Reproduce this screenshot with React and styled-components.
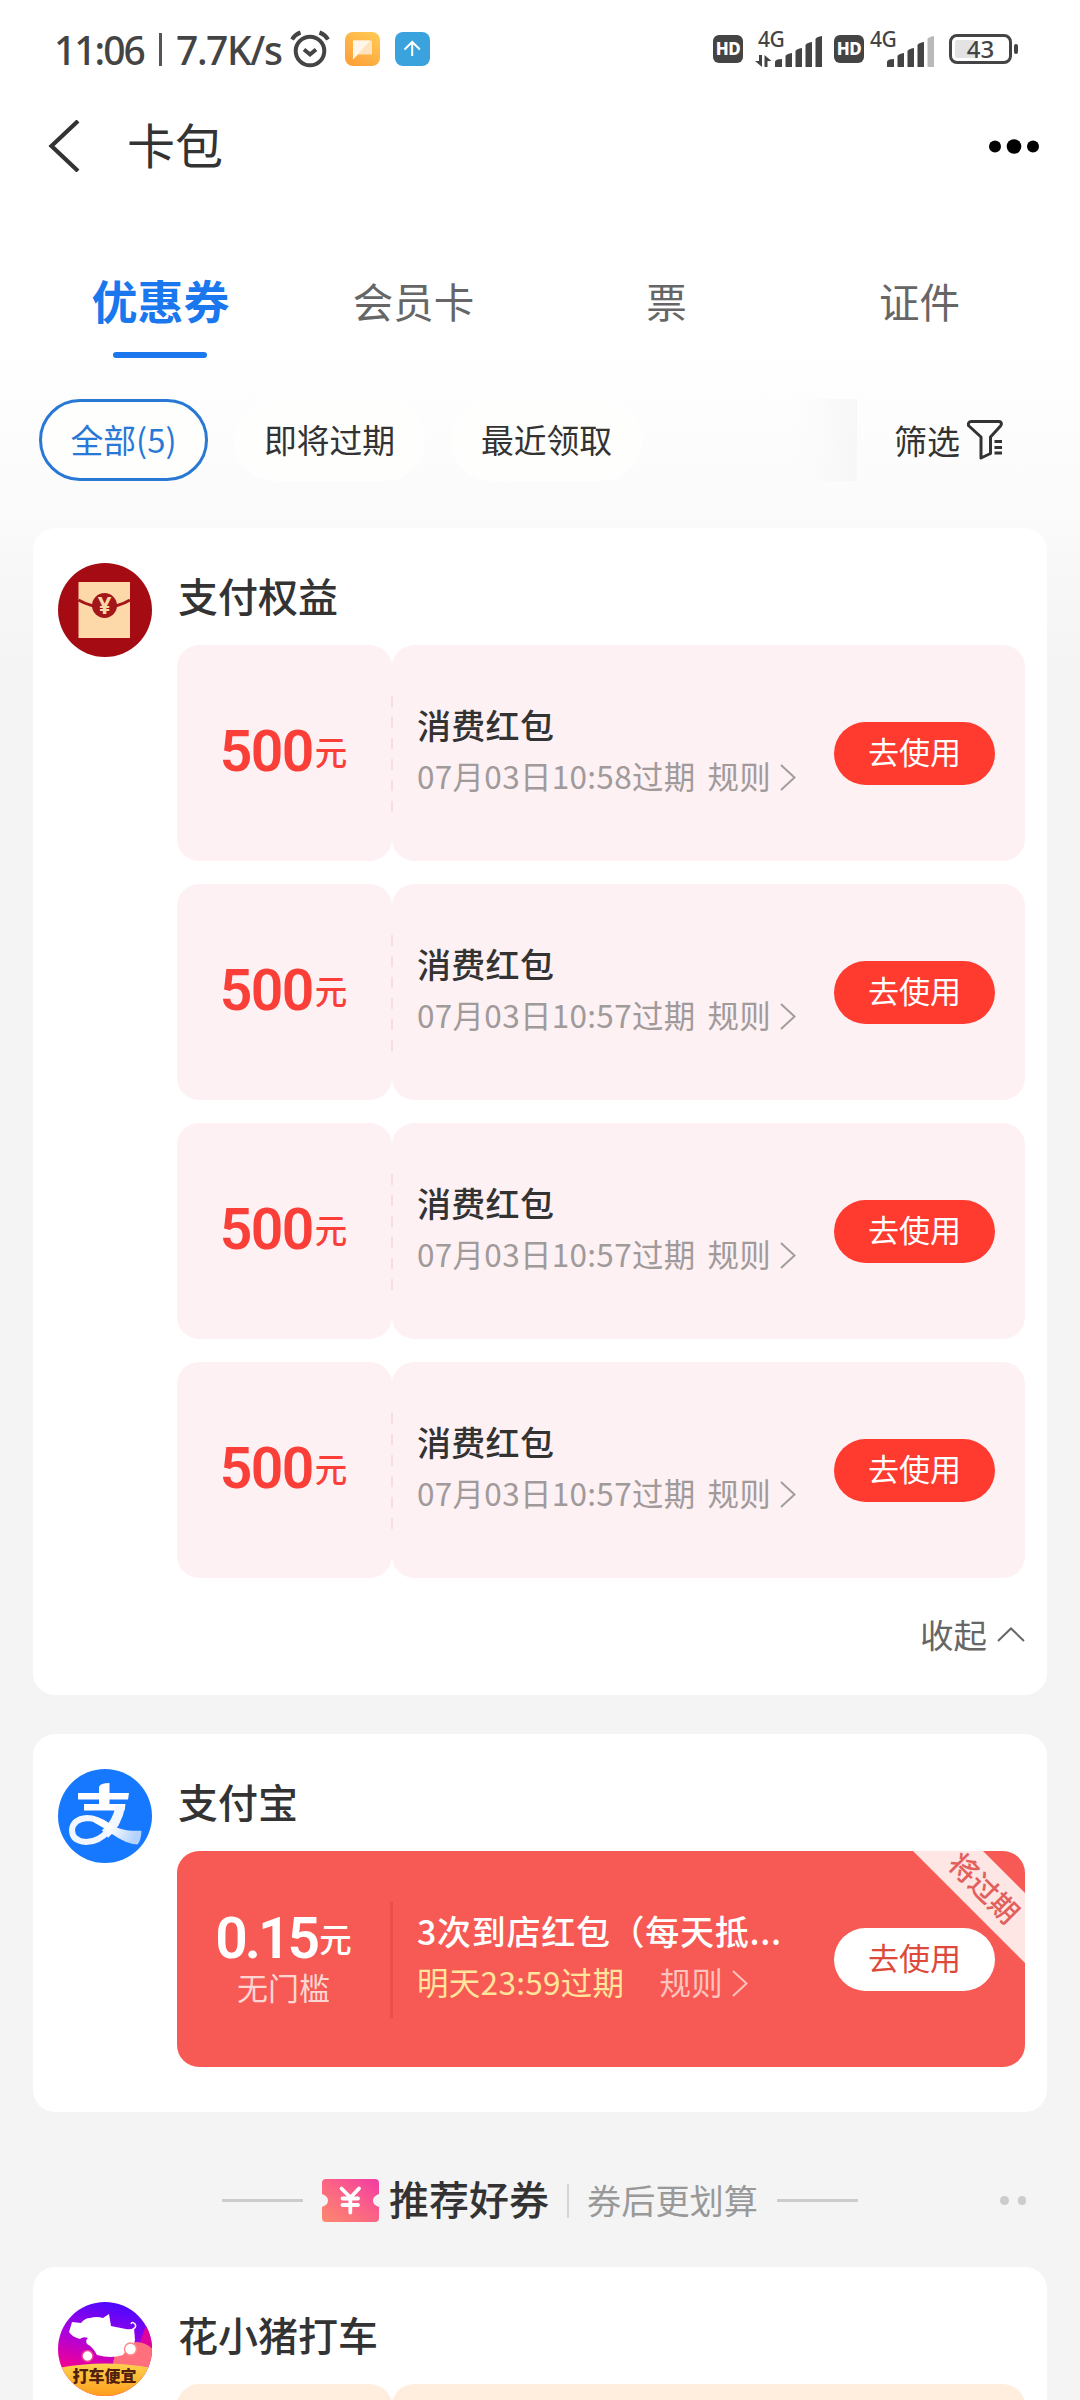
import styled, { createGlobalStyle, css } from "styled-components";

const GlobalStyle = createGlobalStyle`
  * {
    box-sizing: border-box;
  }
  body {
    margin: 0;
    background: #f5f5f5;
    font-family: "Noto Sans CJK SC", "Noto Sans", sans-serif;
    color: #333;
  }
`;

const redPackets = [
  { id: 1, time: "07月03日10:58过期" },
  { id: 2, time: "07月03日10:57过期" },
  { id: 3, time: "07月03日10:57过期" },
  { id: 4, time: "07月03日10:57过期" },
];

const tabs = ["优惠券", "会员卡", "票", "证件"];

// ---- icons ----

const AlarmIcon = () => (
  <svg width="40" height="38" viewBox="0 0 40 38" fill="none" stroke="#444" strokeWidth="4">
    <circle cx="20" cy="21" r="14.3" />
    <path d="M14 19.500l6 5 6-5" />
    <path d="M2 9.500Q5 4.500 10.500 2.500M38 9.500Q35 4.500 29.500 2.500" />
  </svg>
);

const MessageIcon = () => (
  <svg width="35" height="34" viewBox="0 0 35 34">
    <defs>
      <linearGradient id="msg" x1="1" y1="0" x2="0.3" y2="1">
        <stop offset="0" stopColor="#ffcc55" />
        <stop offset="1" stopColor="#fda23a" />
      </linearGradient>
    </defs>
    <rect width="35" height="34" rx="8" fill="url(#msg)" />
    <path d="M8 8.500h17.500a1.500 1.500 0 0 1 1.500 1.500v12.500H13l-5 5z" fill="#ffe3bd" />
    <path d="M8 8.500h17.500L8 27.500z" fill="#fff6e8" />
  </svg>
);

const UploadIcon = () => (
  <svg width="35" height="34" viewBox="0 0 35 34" fill="none">
    <rect width="35" height="34" rx="8" fill="#3aa3de" />
    <path d="M17.200 24V10M9.500 17.500l7.700-7.500 7.700 7.500" stroke="#fff" strokeWidth="2" />
  </svg>
);

const SignalIcon = ({ weak }) => (
  <svg width="48" height="31" viewBox="0 0 48 31" fill="#444">
    <path d="M0 31v-5q0-3 7-3v8z" />
    <path d="M10.500 31V20q1-2 6.500-3v14z" />
    <path d="M20.500 31V15q1-2 6.500-3v19z" />
    <path d="M30.500 31V9q1-2 6.500-3v25z" />
    <path d="M40.500 31V3q1-2 6.500-3v31z" fill={weak ? "#b9b9b9" : "#444"} />
  </svg>
);

const DataArrows = () => (
  <svg width="17" height="12" viewBox="0 0 17 12" fill="#444">
    <path d="M4 0h3v12L0 6h4zM9.500 12V0l7 6h-4v6z" />
  </svg>
);

const BackIcon = () => (
  <svg width="32" height="52" viewBox="0 0 32 52" fill="none" stroke="#333" strokeWidth="4.200">
    <path d="M30 1L3.500 26 30 51" />
  </svg>
);

const MoreIcon = () => (
  <svg width="50" height="15" viewBox="0 0 50 15">
    <circle cx="6" cy="7.500" r="6" />
    <circle cx="25" cy="7.500" r="7.300" />
    <circle cx="44" cy="7.500" r="6" />
  </svg>
);

const FunnelIcon = () => (
  <svg width="36" height="40" viewBox="0 0 36 40" fill="none" stroke="#333" strokeWidth="3">
    <path
      d="M4 1.500h28c2.500 0 3 3 1.500 4.500L23.500 17v16.500l-9.500 4.500V17L2 6C.500 4.500 1.500 1.500 4 1.500z"
      strokeLinejoin="round"
    />
    <path d="M27.500 21.500h7.500M27.500 27.500h7.500M27.500 33h7.500" />
  </svg>
);

const RedPacketLogo = () => (
  <svg width="94" height="94" viewBox="0 0 94 94">
    <circle cx="47" cy="47" r="47" fill="#a50b12" />
    <rect x="20.500" y="19" width="51.500" height="56" fill="#fdd9a9" />
    <path d="M20.500 37q12 7 26 7t25.500-7" fill="none" stroke="#a3161a" strokeWidth="3" />
    <circle cx="46.500" cy="42.500" r="12.500" fill="#a3161a" />
    <text x="46.500" y="51" textAnchor="middle" fontSize="24" fontWeight="700" fontFamily="Noto Sans" fill="#fbd6a6">
      ¥
    </text>
  </svg>
);

const AlipayLogo = () => (
  <svg width="94" height="94" viewBox="0 0 94 94">
    <defs>
      <linearGradient id="tail" x1="0" y1="0" x2="1" y2="0.300">
        <stop offset="0.400" stopColor="#fff" />
        <stop offset="1" stopColor="#b3d2fd" />
      </linearGradient>
    </defs>
    <circle cx="47" cy="47" r="47" fill="#1677ff" />
    <path
      d="M41 18q1-4 10.500-4v10H71l-1 6.500H51.500V35H67.500l-1 6.500H26V35h15v-4.500H20V24h21z"
      fill="#fff"
    />
    <path d="M62.500 37Q59 55 47 65" fill="none" stroke="#f2f7ff" strokeWidth="9.500" />
    <path
      d="M51 61Q41 73 28 73Q14 72 14 61Q15 50 29 49Q39 49 50 57"
      fill="none"
      stroke="#f2f7ff"
      strokeWidth="6"
    />
    <path d="M36 47.500Q50 54 60 59Q70 62.500 83.500 61.700Q83 72 79.500 75.500Q68 75 54 65Q45 58 36 53.500z" fill="url(#tail)" />
  </svg>
);

const PigLogo = () => (
  <svg width="94" height="94" viewBox="0 0 94 94">
    <defs>
      <clipPath id="pigClip">
        <circle cx="47" cy="47" r="47" />
      </clipPath>
      <linearGradient id="pigBg" x1="0.600" y1="0" x2="0.400" y2="0.750">
        <stop offset="0" stopColor="#4a08ff" />
        <stop offset="0.550" stopColor="#a800e0" />
        <stop offset="1" stopColor="#ee0098" />
      </linearGradient>
      <linearGradient id="pigBand" x1="0" y1="0" x2="0" y2="1">
        <stop offset="0" stopColor="#fbd24e" />
        <stop offset="1" stopColor="#ff9d1d" />
      </linearGradient>
    </defs>
    <g clipPath="url(#pigClip)">
      <rect width="94" height="94" fill="url(#pigBg)" />
      <path d="M94 10v40H80q4-20 14-40z" fill="#e0009c" />
      <circle cx="78" cy="63" r="23" fill="#ff6f7c" />
      <path d="M0 66q47-9 94 0v28H0z" fill="url(#pigBand)" />
      <path
        d="M14 20l9 1q4-5 9-5 7-2 13 0l6-4 2 12q10 2 15 3 4 1 8-1l1 12q-1 5-4 7-6 4-8 8-12 4-26 0-4-8-10-11-2-4 1-6-5-2-8 1-8-2-11-7z"
        fill="#fff"
      />
      <path d="M75 27q4-2 2-5-3-3-4 0" fill="none" stroke="#fff" strokeWidth="1.500" />
      <circle cx="29.500" cy="54" r="5.500" fill="#fff" stroke="#f43a94" strokeWidth="1.500" />
      <circle cx="72.500" cy="47" r="6" fill="#fff" stroke="#ff8a8a" strokeWidth="1.500" />
      <text
        x="46.500"
        y="80"
        textAnchor="middle"
        fontSize="16"
        fontWeight="900"
        fontFamily="Noto Sans CJK SC"
        fill="#53200d"
      >
        打车便宜
      </text>
    </g>
  </svg>
);

const TicketIcon = () => (
  <svg width="57" height="43" viewBox="0 0 57 43">
    <defs>
      <linearGradient id="ticket" x1="0" y1="1" x2="1" y2="0">
        <stop offset="0" stopColor="#fd8a6c" />
        <stop offset="0.500" stopColor="#fb6485" />
        <stop offset="1" stopColor="#f23ba5" />
      </linearGradient>
    </defs>
    <path
      d="M4 0h49q4 0 4 4v11q-6 2-6 6.500t6 6.500v11q0 4-4 4H4q-4 0-4-4V28q6-2 6-6.500T0 15V4q0-4 4-4z"
      fill="url(#ticket)"
    />
    <path
      d="M19.500 9.500l9 9 8.500-9M28.300 18.500v15M20.500 19.500h15.500M20.500 26h15.500"
      fill="none"
      stroke="#fff"
      strokeWidth="3.800"
      strokeLinecap="round"
    />
  </svg>
);

const ArrowRight = ({ color }) => (
  <svg width="16" height="27" viewBox="0 0 16 27" fill="none" stroke={color} strokeWidth="2">
    <path d="M1 1l13.500 12.500L1 26" />
  </svg>
);

const ArrowUp = () => (
  <svg width="28" height="15" viewBox="0 0 28 15" fill="none" stroke="#666" strokeWidth="2">
    <path d="M1 14L14 1.500 27 14" />
  </svg>
);

// ---- parts ----

const Coupon = ({ item }) => (
  <Ticket>
    <Amount>
      <Price>
        <Num>500</Num>元
      </Price>
    </Amount>
    <Dashed />
    <Detail>
      <Info>
        <Name>消费红包</Name>
        <Meta>
          {item.time}
          <Rule>规则</Rule>
          <ArrowRight color="#a39c9d" />
        </Meta>
      </Info>
      <UseButton>去使用</UseButton>
    </Detail>
  </Ticket>
);

const App = () => {
  return (
    <Page>
      <GlobalStyle />

      <StatusBar>
        <Clock>11:06</Clock>
        <Bar />
        <Speed>7.7K/s</Speed>
        <StatusIcons>
          <AlarmIcon />
          <MessageIcon />
          <UploadIcon />
        </StatusIcons>
        <Network>
          <Hd>HD</Hd>
          <Sim $gap={12}>
            <SimLabel>
              4G
              <DataArrows />
            </SimLabel>
            <SignalIcon />
          </Sim>
          <Hd $left={11}>HD</Hd>
          <Sim $gap={6}>
            <SimLabel $wide>4G</SimLabel>
            <SignalIcon weak />
          </Sim>
          <Battery>43</Battery>
          <BatteryTip />
        </Network>
      </StatusBar>

      <NavBar>
        <BackIcon />
        <NavTitle>卡包</NavTitle>
        <MoreIcon />
      </NavBar>

      <Tabs>
        {tabs.map((tab, i) => (
          <Tab key={tab} $active={i === 0}>
            {tab}
          </Tab>
        ))}
      </Tabs>

      <Filters>
        <Chip $active>全部(5)</Chip>
        <Chip>即将过期</Chip>
        <Chip>最近领取</Chip>
        <Fade />
        <FilterButton>
          筛选
          <FunnelIcon />
        </FilterButton>
      </Filters>

      <Card $height={1167}>
        <RedPacketLogo />
        <Body>
          <Shop>支付权益</Shop>
          <List>
            {redPackets.map((item) => (
              <Coupon key={item.id} item={item} />
            ))}
          </List>
          <Collapse>
            收起
            <ArrowUp />
          </Collapse>
        </Body>
      </Card>

      <Card $height={378} $top={39}>
        <AlipayLogo />
        <Body>
          <Shop>支付宝</Shop>
          <Ticket $red>
            <Amount $red>
              <Price>
                <Num $tight>0.15</Num>元
              </Price>
              <Limit>无门槛</Limit>
            </Amount>
            <Solid />
            <Detail $red>
              <Info>
                <Name $wide>3次到店红包（每天抵...</Name>
                <Meta $soon>
                  明天23:59过期
                  <Rule $soon>规则</Rule>
                  <ArrowRight color="#fcc3bf" />
                </Meta>
              </Info>
              <UseButton $white>去使用</UseButton>
            </Detail>
            <Ribbon>
              <RibbonText>将过期</RibbonText>
            </Ribbon>
          </Ticket>
        </Body>
      </Card>

      <Recommend>
        <Line />
        <TicketIcon />
        <RecTitle>推荐好券</RecTitle>
        <Split />
        <RecSub>券后更划算</RecSub>
        <Line />
        <Dots>
          <Dot />
          <Dot />
        </Dots>
      </Recommend>

      <Card $height={400}>
        <PigLogo />
        <Body>
          <Shop>花小猪打车</Shop>
          <Ticket>
            <Amount $orange />
            <Detail $orange />
          </Ticket>
        </Body>
      </Card>
    </Page>
  );
};

export default App;

const Page = styled.div`
  width: 1080px;
  height: 2400px;
  overflow: hidden;
  background: linear-gradient(#fff 340px, #fbfbfb 500px, #f8f8f8 560px, #f4f4f4 680px);
`;

const StatusBar = styled.div`
  height: 98px;
  padding-left: 54px;
  display: flex;
  align-items: center;
  font-family: "Noto Sans", sans-serif;
  font-size: 39px;
  font-weight: 500;
  color: #444;
`;

const Clock = styled.span`
  width: 91px;
  letter-spacing: -2px;
`;

const Bar = styled.span`
  width: 3px;
  height: 33px;
  margin: 0 14px;
  background: #555;
`;

const Speed = styled.span`
  width: 108px;
  margin-right: 6px;
  letter-spacing: -1.4px;
`;

const StatusIcons = styled.div`
  display: flex;
  align-items: center;
  gap: 15px;
`;

const Network = styled.div`
  display: flex;
  align-items: center;
  margin-left: auto;
  margin-right: 62px;
`;

const Hd = styled.span`
  width: 30px;
  height: 28px;
  margin-left: ${(p) => p.$left || 0}px;
  border-radius: 6px;
  background: #444;
  color: #fff;
  font-size: 17px;
  font-weight: 800;
  line-height: 28px;
  text-align: center;
  letter-spacing: -0.5px;
`;

const Sim = styled.div`
  display: flex;
  align-items: flex-end;
  height: 36px;
  margin-left: ${(p) => p.$gap}px;
`;

const SimLabel = styled.div`
  width: ${(p) => (p.$wide ? 17 : 20)}px;
  height: 36px;
  display: flex;
  flex-direction: column;
  justify-content: space-between;
  padding-left: ${(p) => (p.$wide ? 0 : 3)}px;
  white-space: nowrap;
  font-size: 21px;
  line-height: 16px;
  letter-spacing: -0.6px;

  svg {
    margin-left: -3px;
  }
`;

const Battery = styled.span`
  width: 63px;
  height: 30px;
  margin-left: 14px;
  border: 3px solid #444;
  border-radius: 8px;
  background: linear-gradient(90deg, #e3e3e3 20px, #fff 20px) content-box;
  padding: 3px;
  font-size: 24px;
  line-height: 18px;
  text-align: center;
`;

const BatteryTip = styled.span`
  width: 4px;
  height: 10px;
  margin-left: 2px;
  border-radius: 2px;
  background: #444;
`;

const NavBar = styled.div`
  display: flex;
  align-items: center;
  height: 96px;
  padding: 0 41px 0 48px;
`;

const NavTitle = styled.div`
  flex: 1;
  margin: -6px 0 0 47px;
  font-size: 48px;
  line-height: 60px;
`;

const Tabs = styled.div`
  display: grid;
  grid-template-columns: repeat(4, 253px);
  height: 164px;
  margin-top: 35px;
  padding: 34px 34px 0;
`;

const Tab = styled.div`
  display: flex;
  flex-direction: column;
  align-items: center;
  height: 96px;
  font-size: 40.5px;
  line-height: 76px;
  color: #666;

  ${(p) =>
    p.$active &&
    css`
      font-size: 46px;
      line-height: 73px;
      font-weight: 700;
      color: #1a77ee;

      &::after {
        content: "";
        width: 94px;
        height: 6px;
        margin: 16px 1px 0 0;
        border-radius: 3px;
        background: #1a77ee;
      }
    `}
`;

const Filters = styled.div`
  display: flex;
  align-items: center;
  height: 82px;
  margin: 6px 0 47px 39px;
`;

const Chip = styled.div`
  width: ${(p) => (p.$active ? 169 : 191)}px;
  height: 82px;
  margin-right: 26px;
  border: ${(p) => (p.$active ? "3px solid #2878d4" : "3px solid #fefefe")};
  border-radius: 41px;
  background: #fefefd;
  color: ${(p) => (p.$active ? "#2878d8" : "#333")};
  font-size: 32.8px;
  line-height: 73px;
  text-align: center;
`;

const Fade = styled.div`
  width: 64px;
  height: 82px;
  margin-left: 125px;
  background: linear-gradient(90deg, rgba(246, 246, 246, 0), #f7f7f7);
`;

const FilterButton = styled.div`
  display: flex;
  align-items: center;
  gap: 7px;
  margin-left: 37px;
  font-size: 33px;
  line-height: 78px;
`;

const Card = styled.div`
  display: flex;
  align-items: flex-start;
  gap: 25px;
  width: 1014px;
  height: ${(p) => p.$height}px;
  margin: ${(p) => p.$top || 0}px 0 0 33px;
  padding: 35px 22px 0 25px;
  border-radius: 22px;
  background: #fff;
`;

const Body = styled.div`
  flex: 1;
`;

const Shop = styled.div`
  height: 82px;
  padding-left: 1px;
  font-size: 40px;
  font-weight: 500;
  line-height: 65px;
`;

const List = styled.div`
  display: flex;
  flex-direction: column;
  gap: 23px;
`;

const Ticket = styled.div`
  display: flex;
  position: relative;
  height: 216px;
  border-radius: 22px;
  background: ${(p) => (p.$red ? "#f75a54" : "transparent")};
`;

const fill = (p) => {
  if (p.$red) return "transparent";
  return p.$orange ? "#ffeddd" : "#fef1f3";
};

const Amount = styled.div`
  display: flex;
  flex-direction: column;
  justify-content: center;
  align-items: center;
  width: 215px;
  padding: 0 2px ${(p) => (p.$red ? 0 : 4)}px 0;
  border-radius: 22px;
  background: ${fill};
  color: ${(p) => (p.$red ? "#fff" : "#fa3e38")};
`;

const Price = styled.div`
  display: flex;
  align-items: center;
  height: 56px;
  font-size: 32.5px;
  font-weight: 500;
  line-height: 48px;
  white-space: nowrap;
`;

const Num = styled.span`
  margin: 2px 2px 0 0;
  font-family: Roboto, sans-serif;
  font-size: 57px;
  font-weight: 600;
  letter-spacing: ${(p) => (p.$tight ? -3 : -1.6)}px;
`;

const Limit = styled.div`
  font-size: 31px;
  line-height: 42px;
  color: #fdd6d3;
`;

const Dashed = styled.div`
  width: 2px;
  height: 116px;
  margin: 51px -1px 0;
  z-index: 1;
  background: repeating-linear-gradient(#f9dcdf 0 11px, transparent 11px 21px);
`;

const Solid = styled.div`
  width: 3px;
  height: 116px;
  margin: 51px -1px 0 -2px;
  background: #e94f4a;
`;

const Detail = styled.div`
  flex: 1;
  display: flex;
  align-items: center;
  justify-content: space-between;
  padding: 0 30px 0 25px;
  border-radius: 22px;
  background: ${fill};
  color: ${(p) => (p.$red ? "#fff" : "#333")};
`;

const Info = styled.div`
  display: flex;
  flex-direction: column;
  padding-bottom: 6px;
`;

const Name = styled.div`
  font-size: 34px;
  font-weight: 500;
  line-height: 50px;
  letter-spacing: ${(p) => (p.$wide ? 0.7 : 0.3)}px;
  white-space: nowrap;
`;

const Meta = styled.div`
  display: flex;
  align-items: center;
  font-size: 31.5px;
  line-height: 50px;
  letter-spacing: 0.3px;
  white-space: nowrap;
  color: ${(p) => (p.$soon ? "#ffe59c" : "#a09a9b")};

  svg {
    margin: 4px 0 0 9px;
  }
`;

const Rule = styled.span`
  margin-left: ${(p) => (p.$soon ? 35 : 12)}px;
  color: ${(p) => (p.$soon ? "#fcc3bf" : "inherit")};
`;

const UseButton = styled.button`
  flex: none;
  width: 161px;
  height: 63px;
  padding: 0 0 4px;
  border: none;
  border-radius: 32px;
  background: ${(p) => (p.$white ? "#fff" : "#ff3b30")};
  color: ${(p) => (p.$white ? "#dd4a3c" : "#fff")};
  font-family: inherit;
  font-size: 31px;
  line-height: 58px;
`;

// diagonal band across the top right corner of a coupon
const Ribbon = styled.div`
  position: absolute;
  top: 0;
  right: 0;
  width: 112px;
  height: 112px;

  &::before {
    content: "";
    position: absolute;
    inset: 0;
    background: #fde6e4;
    clip-path: polygon(0 0, 70px 0, 112px 42px, 112px 112px);
  }
`;

const RibbonText = styled.span`
  position: absolute;
  top: 21px;
  left: 28px;
  width: 88px;
  transform: rotate(45deg);
  color: #e2605c;
  font-size: 28.5px;
  font-weight: 500;
  line-height: 30px;
  text-align: center;
  white-space: nowrap;
`;

const Collapse = styled.div`
  display: flex;
  justify-content: flex-end;
  align-items: center;
  gap: 10px;
  margin-top: 31px;
  font-size: 33.5px;
  line-height: 50px;
  color: #666;
`;

const Recommend = styled.div`
  display: flex;
  align-items: center;
  height: 155px;
  padding: 22px 54px 0 222px;
`;

const Line = styled.div`
  width: 81px;
  height: 3px;
  margin-right: 19px;
  background: #ccc;
`;

const RecTitle = styled.div`
  margin: -6px 18px 0 10px;
  font-size: 40px;
  font-weight: 500;
`;

const Split = styled.div`
  width: 2px;
  height: 34px;
  margin-right: 18px;
  background: #d4d4d4;
`;

const RecSub = styled.div`
  margin: -4px 19px 0 0;
  font-size: 34.2px;
  color: #999;
`;

const Dots = styled.div`
  display: flex;
  gap: 9px;
  margin-left: auto;
`;

const Dot = styled.span`
  width: 8.5px;
  height: 8.5px;
  border-radius: 50%;
  background: #ccc;
`;
